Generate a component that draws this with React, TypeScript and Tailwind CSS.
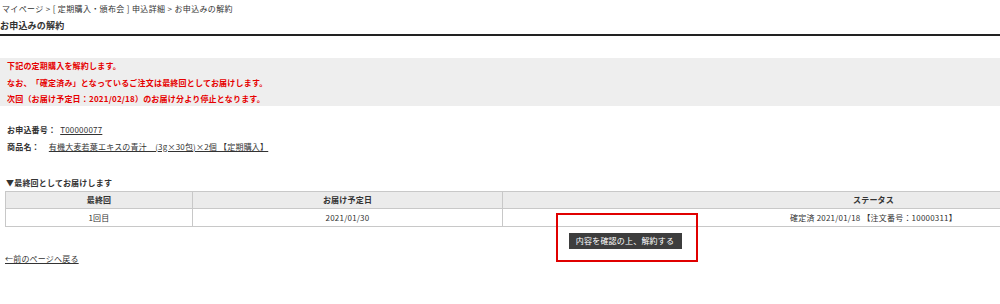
export default function App() {
	return (
		<div className="relative w-[1000px] h-[304px] overflow-hidden bg-white text-[#333] text-[8px] tracking-[0.2px] font-['Noto_Sans_CJK_JP','Noto_Sans',sans-serif]">
			<div className="w-[1250px]">
				<div className="h-[17px] leading-[17px] pl-[2px] tracking-[0.35px] whitespace-pre">
					マイページ &gt; [ 定期購入・頒布会 ] 申込詳細 &gt; お申込みの解約
				</div>
				<div className="h-[19px] leading-[17px] text-[9px] font-bold border-b-2 border-[#222]">
					お申込みの解約
				</div>

				<div className="mt-[22px] h-[48px] bg-[#eeeeee] px-[7px] leading-[16.5px] font-bold text-[#e60000]">
					<p>下記の定期購入を解約します。</p>
					<p>なお、「確定済み」となっているご注文は最終回としてお届けします。</p>
					<p>次回（お届け予定日：2021/02/18）のお届け分より停止となります。</p>
				</div>

				<div className="mt-[15px] px-[7px] leading-[17px]">
					<div className="flex">
						<span className="font-bold">お申込番号：</span>
						<a href="#" className="ml-[4px] underline">T00000077</a>
					</div>
					<div className="flex">
						<span className="font-bold">商品名：</span>
						<a href="#" className="ml-[9px] underline">
							有機大麦若葉エキスの青汁　(3g×30包)×2個 【定期購入】
						</a>
					</div>
				</div>

				<div className="mt-[20px] pl-[6px] leading-[16px] font-bold">▼最終回としてお届けします</div>

				<table className="ml-[5px] w-[1240px] border-collapse text-center">
					<thead>
						<tr className="h-[17px] bg-[#ebebeb]">
							<th className="w-[187px] border border-[#c8c8c8] font-bold">最終回</th>
							<th className="w-[310px] border border-[#c8c8c8] font-bold">お届け予定日</th>
							<th className="border border-[#c8c8c8] font-bold">ステータス</th>
						</tr>
					</thead>
					<tbody>
						<tr className="h-[18px]">
							<td className="border border-[#c8c8c8]">1回目</td>
							<td className="border border-[#c8c8c8]">2021/01/30</td>
							<td className="border border-[#c8c8c8]">確定済 2021/01/18 【注文番号：10000311】</td>
						</tr>
					</tbody>
				</table>

				<div className="mt-[6px] flex justify-center">
					<button className="h-[16px] w-[113px] bg-[#3d3d3d] text-white text-[8px] leading-[16px]">
						内容を確認の上、解約する
					</button>
				</div>

				<div className="mt-[1px] pl-[5px] leading-[17px]">
					<a href="#" className="underline">←前のページへ戻る</a>
				</div>
			</div>

			<div className="absolute left-[556px] top-[213px] w-[142px] h-[49px] border-2 border-[#e00000]" />
		</div>
	);
}
